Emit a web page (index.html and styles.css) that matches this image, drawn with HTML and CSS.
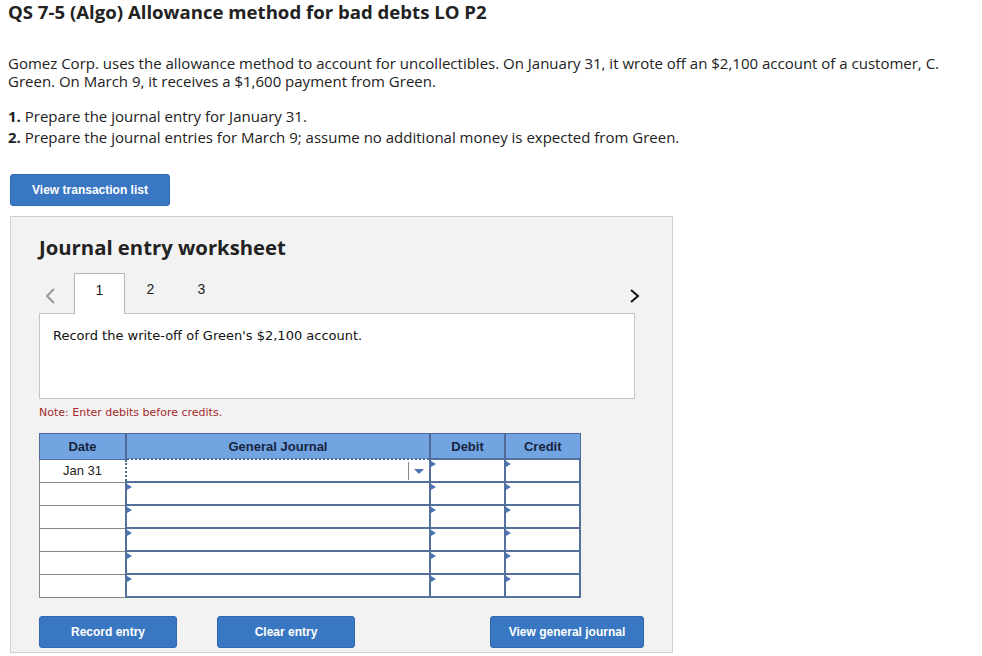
FILE: index.html
```html
<!DOCTYPE html>
<html lang="en">
<head>
    <meta charset="UTF-8">
    <meta name="viewport" content="width=device-width, initial-scale=1.0">
    <title>QS 7-5 (Algo) Allowance method for bad debts</title>
    <link rel="stylesheet" href="styles.css">
</head>
<body>
    <h1 class="title">QS 7-5 (Algo) Allowance method for bad debts LO P2</h1>

    <p class="intro">Gomez Corp. uses the allowance method to account for uncollectibles. On January 31, it wrote off an $2,100 account of a customer, C. Green. On March 9, it receives a $1,600 payment from Green.</p>

    <div class="steps">
        <div class="step"><b>1.</b> Prepare the journal entry for January 31.</div>
        <div class="step"><b>2.</b> Prepare the journal entries for March 9; assume no additional money is expected from Green.</div>
    </div>

    <button class="btn btn-list">View transaction list</button>

    <div class="worksheet">
        <h2 class="ws-title">Journal entry worksheet</h2>

        <div class="tabs">
            <span class="arrow arrow-prev">
                <svg width="12" height="18" viewBox="0 0 12 18"><path d="M10 2 L3 9 L10 16" fill="none" stroke="#999" stroke-width="2"/></svg>
            </span>
            <span class="tab active">1</span>
            <span class="tab">2</span>
            <span class="tab">3</span>
            <span class="arrow arrow-next">
                <svg width="12" height="18" viewBox="0 0 12 18"><path d="M2 3 L9 9 L2 15" fill="none" stroke="#111" stroke-width="2"/></svg>
            </span>
        </div>

        <div class="task">Record the write-off of Green's $2,100 account.</div>

        <p class="note">Note: Enter debits before credits.</p>

        <table class="journal">
            <thead>
                <tr>
                    <th class="c-date">Date</th>
                    <th class="c-acct">General Journal</th>
                    <th class="c-num">Debit</th>
                    <th class="c-num">Credit</th>
                </tr>
            </thead>
            <tbody>
                <tr>
                    <td class="c-date">Jan 31</td>
                    <td class="c-acct focus"><span class="dd"></span></td>
                    <td class="c-num mark"></td>
                    <td class="c-num mark"></td>
                </tr>
                <tr><td class="c-date"></td><td class="c-acct mark"></td><td class="c-num mark"></td><td class="c-num mark"></td></tr>
                <tr><td class="c-date"></td><td class="c-acct mark"></td><td class="c-num mark"></td><td class="c-num mark"></td></tr>
                <tr><td class="c-date"></td><td class="c-acct mark"></td><td class="c-num mark"></td><td class="c-num mark"></td></tr>
                <tr><td class="c-date"></td><td class="c-acct mark"></td><td class="c-num mark"></td><td class="c-num mark"></td></tr>
                <tr><td class="c-date"></td><td class="c-acct mark"></td><td class="c-num mark"></td><td class="c-num mark"></td></tr>
            </tbody>
        </table>

        <div class="actions">
            <button class="btn btn-act">Record entry</button>
            <button class="btn btn-act">Clear entry</button>
            <button class="btn btn-act btn-journal">View general journal</button>
        </div>
    </div>
</body>
</html>
```

FILE: styles.css
```css
body {
    margin: 0;
    padding: 0 8px;
    font-family: "Open Sans", Lato, sans-serif;
    color: #222;
    background: #fff;
}
.title {
    font-size: 18.6px;
    font-weight: 700;
    margin: 0;
    padding-top: 2px;
    line-height: 20px;
}
.intro {
    font-size: 15px;
    line-height: 18px;
    margin: 32px 0 0;
    width: 945px;
}
.steps {
    font-size: 15px;
    line-height: 18px;
    margin: 17px 0 0;
}
.step {
    height: 18px;
}
.step + .step {
    margin-top: 3px;
}
.steps b {
    font-weight: 700;
}
.btn {
    font-family: "Liberation Sans", Arial, sans-serif;
    font-weight: 700;
    font-size: 12px;
    color: #fff;
    background: #3a77c2;
    border: 1px solid #2f68b0;
    border-radius: 3px;
    cursor: pointer;
}
.btn-list {
    display: block;
    margin: 28px 0 0 2px;
    width: 160px;
    height: 32px;
}
.worksheet {
    margin: 10px 0 0 2px;
    width: 663px;
    height: 437px;
    box-sizing: border-box;
    background: #f2f2f2;
    border: 1px solid #d0d0d0;
    padding: 0 0 0 28px;
}
.ws-title {
    font-size: 20.3px;
    font-weight: 700;
    margin: 20px 0 0;
    line-height: 20px;
}
.tabs {
    display: flex;
    align-items: flex-end;
    margin-top: 16px;
    height: 40px;
    width: 596px;
    font-family: "Liberation Sans", Arial, sans-serif;
    font-size: 14px;
}
.arrow {
    display: flex;
    align-items: center;
    height: 34px;
}
.arrow-prev {
    width: 35px;
    padding-left: 5px;
    box-sizing: border-box;
}
.arrow-next {
    margin-left: auto;
    margin-right: -6px;
}
.tab {
    width: 51px;
    display: flex;
    justify-content: center;
    align-items: center;
    padding-bottom: 8px;
    box-sizing: border-box;
    height: 40px;
}
.tab.active {
    background: #fff;
    border: 1px solid #b5b5b5;
    border-bottom: none;
    position: relative;
    z-index: 1;
    margin-bottom: -1px;
    height: 41px;
}
.task {
    width: 596px;
    height: 86px;
    box-sizing: border-box;
    background: #fff;
    border: 1px solid #c4c4c4;
    padding: 14px 13px;
    font-family: "DejaVu Sans", Verdana, sans-serif;
    font-size: 13px;
    line-height: 16px;
    color: #111;
}
.note {
    margin: 7px 0 0;
    font-family: "DejaVu Sans", Verdana, sans-serif;
    font-size: 11px;
    color: #a52a2a;
    line-height: 14px;
}
.journal {
    margin-top: 13px;
    border-collapse: collapse;
    font-family: "Liberation Sans", Arial, sans-serif;
    font-size: 13px;
    background: #fff;
}
.journal th {
    background: #72a4e2;
    color: #17253f;
    font-weight: 700;
    height: 24px;
    padding: 0;
    border: 1px solid #4d6b96;
}
.journal th.c-acct,
.journal th.c-num {
    border-left: 2px solid #4d6b96;
}
.journal td {
    height: 21px;
    padding: 0;
    position: relative;
}
.c-date {
    width: 85px;
    text-align: center;
}
.c-acct {
    width: 302px;
}
.c-num {
    width: 73px;
}
.journal td.c-date {
    border: 1px solid #888;
    color: #222;
}
.journal td.c-acct,
.journal td.c-num {
    border: 2px solid #54709c;
}
.journal td.focus {
    border: 2px dotted #4d6b96;
}
.mark::before {
    content: "";
    position: absolute;
    left: 0;
    top: 1px;
    border-left: 5px solid #4a74b2;
    border-top: 3px solid transparent;
    border-bottom: 3px solid transparent;
}
.dd {
    position: absolute;
    right: 0;
    top: 2px;
    width: 20px;
    height: 18px;
    border-left: 1px solid #888;
}
.dd::after {
    content: "";
    position: absolute;
    left: 5px;
    top: 7px;
    border-top: 5px solid #4a74b2;
    border-left: 5px solid transparent;
    border-right: 5px solid transparent;
}
.actions {
    display: flex;
    margin-top: 18px;
    width: 605px;
}
.btn-act {
    width: 138px;
    height: 32px;
    margin-right: 40px;
}
.btn-journal {
    width: 154px;
    margin-left: auto;
    margin-right: 0;
}
```
